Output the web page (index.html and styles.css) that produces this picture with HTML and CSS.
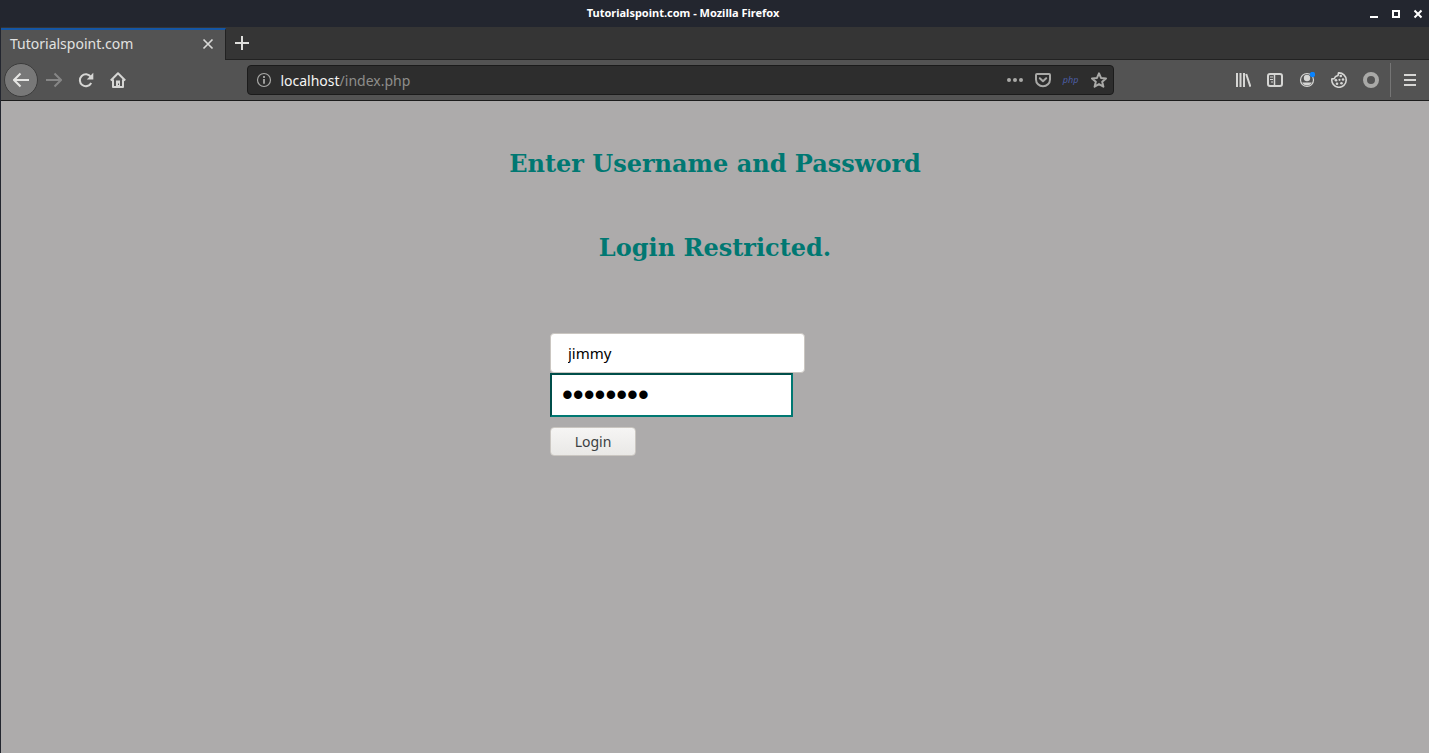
FILE: index.html
```html
<!DOCTYPE html>
<html lang="en">
<head>
<meta charset="utf-8">
<title>Tutorialspoint.com</title>
<link rel="stylesheet" href="styles.css">
</head>
<body>
<div class="window">
  <header class="titlebar">
    <span class="titlebar-text">Tutorialspoint.com - Mozilla Firefox</span>
    <div class="window-controls">
      <button class="window-button" aria-label="Minimize"><svg width="10" height="10" viewBox="0 0 10 10"><path d="M1 8h8" stroke="#fff" stroke-width="2"/></svg></button>
      <button class="window-button" aria-label="Maximize"><svg width="10" height="10" viewBox="0 0 10 10"><path d="M2 2h6v6H2z" fill="none" stroke="#fff" stroke-width="2"/></svg></button>
      <button class="window-button" aria-label="Close"><svg width="10" height="10" viewBox="0 0 10 10"><path d="M1.500 1.500l7 7M8.500 1.500l-7 7" stroke="#fff" stroke-width="2"/></svg></button>
    </div>
  </header>

  <div class="tabstrip">
    <div class="tab">
      <span class="tab-title">Tutorialspoint.com</span>
      <button class="tab-close" aria-label="Close tab"><svg width="12" height="12" viewBox="0 0 12 12"><path d="M1.500 1.500l9 9M10.500 1.500l-9 9" stroke="#d8d8d6" stroke-width="1.700"/></svg></button>
    </div>
    <button class="new-tab" aria-label="New tab"><svg width="14" height="14" viewBox="0 0 14 14"><path d="M7 0v14M0 7h14" stroke="#dededc" stroke-width="2"/></svg></button>
  </div>

  <nav class="toolbar">
    <button class="tool tool-back" aria-label="Back"><svg class="icon" viewBox="0 0 16 16"><path d="M16 8H1.500M7.500 1.500L1 8l6.500 6.500" /></svg></button>
    <button class="tool tool-off" aria-label="Forward" disabled><svg class="icon" viewBox="0 0 16 16"><path d="M0 8h14.500M8.500 1.500L15 8l-6.500 6.500"/></svg></button>
    <button class="tool" aria-label="Reload"><svg class="icon" viewBox="0 0 16 16"><path d="M12.800 4.800A6 6 0 1 0 13.200 11"/><path d="M15.300 0.800v6.700H8.800z" fill="currentColor" stroke="none"/></svg></button>
    <button class="tool" aria-label="Home"><svg class="icon" viewBox="0 0 16 16"><path d="M0.800 8.500L8 1.300l7.200 7.200M3 7.500V15h10V7.500" stroke-linejoin="round"/><path d="M6 8.500h4V15H6z" fill="currentColor" stroke="none"/><path d="M8.500 11.500v1.500" stroke="#535353" stroke-width="1"/></svg></button>
    <span class="spring"></span>
    <div class="urlbar">
      <svg class="icon-info" width="16" height="16" viewBox="0 0 16 16"><circle cx="8" cy="8" r="6.500" fill="none" stroke="#a8a8a6" stroke-width="1.200"/><path d="M8 7v4.800M8 4v2" stroke="#a8a8a6" stroke-width="1.800"/></svg>
      <div class="url"><span class="url-host">localhost</span>/index.php</div>
      <button class="url-action" aria-label="Page actions"><svg class="icon" viewBox="0 0 16 16"><g fill="currentColor" stroke="none"><circle cx="2" cy="8" r="2"/><circle cx="8" cy="8" r="2"/><circle cx="14" cy="8" r="2"/></g></svg></button>
      <button class="url-action" aria-label="Save to Pocket"><svg class="icon" viewBox="0 0 16 16"><path d="M2 2h12a1 1 0 0 1 1 1v4.500a7 6.800 0 0 1-14 0V3a1 1 0 0 1 1-1z"/><path d="M4.800 6.300L8 9.300l3.200-3" stroke-linecap="round" stroke-linejoin="round"/></svg></button>
      <button class="url-action php">php</button>
      <button class="url-action" aria-label="Bookmark this page"><svg class="icon" viewBox="0 0 16 16"><path d="M8 1.300l2 4.600 5 .5-3.800 3.300 1.200 5L8 12.100l-4.400 2.600 1.200-5L1 6.400l5-.5z" stroke-linejoin="round"/></svg></button>
    </div>
    <span class="spring"></span>
    <button class="tool" aria-label="Library"><svg class="icon" viewBox="0 0 16 16"><path d="M2 1v14M5.500 1v14M9 1v14M11.200 2l4.200 12.700"/></svg></button>
    <button class="tool" aria-label="Sidebar"><svg class="icon" viewBox="0 0 16 16"><rect x="1" y="2" width="14" height="12" rx="2"/><path d="M7.500 2v12" stroke-width="1.500"/><path d="M3 5h3M3 7.500h3M4 10h2" stroke-width="1"/></svg></button>
    <button class="tool" aria-label="Account"><svg class="icon" viewBox="0 0 16 16"><circle cx="8" cy="8" r="6.500" stroke-width="1.200"/><circle cx="8" cy="6" r="3.200" fill="currentColor" stroke="none"/><path d="M3.200 10.500h9.600a5.400 5.400 0 0 1-9.600 0z" fill="currentColor" stroke="none"/><circle cx="13.500" cy="2.500" r="2.700" fill="#0a84ff" stroke="none"/></svg></button>
    <button class="tool" aria-label="Cookies"><svg class="icon" viewBox="0 0 16 16"><path d="M7.500 0.900a7.200 7.200 0 1 1-6.600 6l2.400-.3 1.300-2.200 2.400-.9z" stroke-width="1.600" stroke-linejoin="round"/><g fill="currentColor" stroke="none"><circle cx="9.800" cy="4" r="1.300"/><circle cx="5" cy="8.200" r="1.300"/><circle cx="12" cy="7.500" r="1.300"/><circle cx="8.500" cy="7.800" r="1.100"/><circle cx="6" cy="11.800" r="1.300"/><circle cx="10.500" cy="11.300" r="1.300"/></g></svg></button>
    <button class="tool tool-ring" aria-label="Extension"><svg class="icon" viewBox="0 0 16 16"><circle cx="8" cy="8" r="6" stroke-width="4"/></svg></button>
    <span class="divider"></span>
    <button class="tool" aria-label="Open menu"><svg class="icon" viewBox="0 0 16 16"><path d="M2 3h12M2 8h12M2 13h12"/></svg></button>
  </nav>

  <main class="page">
    <h2 class="heading">Enter Username and Password</h2>
    <h2 class="heading">Login Restricted.</h2>
    <form class="login" onsubmit="return false">
      <input class="field field-user" type="text" name="username" value="jimmy" aria-label="Username">
      <input class="field field-password" type="password" name="password" value="abcdefgh" aria-label="Password">
      <button class="submit" type="submit">Login</button>
    </form>
  </main>
</div>
</body>
</html>
```
FILE: styles.css
```css
* {
  box-sizing: border-box;
}

body {
  margin: 0;
  font-family: "Noto Sans", sans-serif;
}

button {
  display: flex;
  align-items: center;
  justify-content: center;
  padding: 0;
  border: 0;
  background: none;
  color: inherit;
  font: inherit;
}

svg {
  display: block;
}

.window {
  display: flex;
  flex-direction: column;
  min-height: 100vh;
  border-left: 1px solid #23262f;
  background: #535353;
}

.titlebar {
  display: flex;
  align-items: center;
  height: 27px;
  background: #23262f;
  color: #fff;
}

.titlebar-text {
  flex: 1;
  padding: 0 0 2px 2px;
  font-size: 11px;
  font-weight: 700;
  text-align: center;
}

.window-controls {
  display: flex;
  gap: 12px;
  padding: 0 6px;
}

.tabstrip {
  display: flex;
  height: 33px;
  background: #353535;
}

.tab {
  display: flex;
  align-items: center;
  justify-content: space-between;
  width: 225px;
  margin-top: 1px;
  padding: 0 11px 2px 9px;
  border-top: 2px solid #1556a4;
  border-right: 1px solid #222;
  background: #535353;
}

.tab-title {
  padding-bottom: 1px;
  color: #e2e2e0;
  font-size: 14px;
}

.new-tab {
  flex: 1;
  justify-content: flex-start;
  padding-left: 9px;
  border-bottom: 1px solid #222;
}

.toolbar {
  display: flex;
  align-items: center;
  height: 41px;
  padding: 0 3px;
  border-bottom: 1px solid #1c1c1c;
  color: #d6d6d4;
}

.icon {
  width: 16px;
  height: 16px;
  fill: none;
  stroke: currentColor;
  stroke-width: 2;
}

.tool {
  flex: none;
  width: 32px;
  height: 32px;
}

.tool-back {
  width: 34px;
  height: 34px;
  border: 1px solid #3c3c3c;
  border-radius: 50%;
  background: #787878;
  color: #e6e6e4;
}

.tool-off {
  color: #868686;
}

.tool-ring {
  color: #a9a9a7;
}

.spring {
  flex: 113;
}

.urlbar {
  display: flex;
  flex: 853;
  align-items: center;
  height: 30px;
  padding: 0 0 0 8px;
  border: 1px solid #1b1b1b;
  border-radius: 4px;
  background: #2d2d2d;
  color: #a9a9a7;
}

.url {
  flex: 1;
  padding-left: 8px;
  color: #8d8d8b;
  font-size: 14px;
}

.url-host {
  color: #f5f5f3;
}

.url-action {
  width: 28px;
  height: 28px;
}

.php {
  padding-bottom: 2px;
  color: #4c5da4;
  font-size: 9px;
  font-style: italic;
}

.divider {
  width: 1px;
  height: 34px;
  margin: 0 3px;
  background: #757575;
}

.page {
  flex: 1;
  padding-top: 49px;
  background: #adabab;
}

.heading {
  margin: 0 0 56px;
  color: #007872;
  font: bold 24px/28px "DejaVu Serif", serif;
  text-align: center;
}

.login {
  display: flex;
  flex-direction: column;
  align-items: flex-start;
  width: 330px;
  margin: 0 auto;
  padding-top: 15px;
}

.field {
  outline: 0;
  background: #fff;
  color: #000;
}

.field-user {
  width: 255px;
  height: 40px;
  padding: 0 17px;
  border: 1px solid #cac6c1;
  border-radius: 4px;
  font: 15px "Noto Sans", sans-serif;
}

.field-password {
  width: 243px;
  height: 44px;
  padding: 0 10px;
  border: 2px solid;
  border-color: #004e4a #007872 #007872 #004e4a;
  font: 31px "Liberation Sans", sans-serif;
}

.submit {
  width: 86px;
  height: 29px;
  margin-top: 10px;
  border: 1px solid #cac6c1;
  border-radius: 4px;
  background: linear-gradient(#f6f5f4, #e9e8e6);
  color: #3a3f42;
  font-size: 14px;
}
```
